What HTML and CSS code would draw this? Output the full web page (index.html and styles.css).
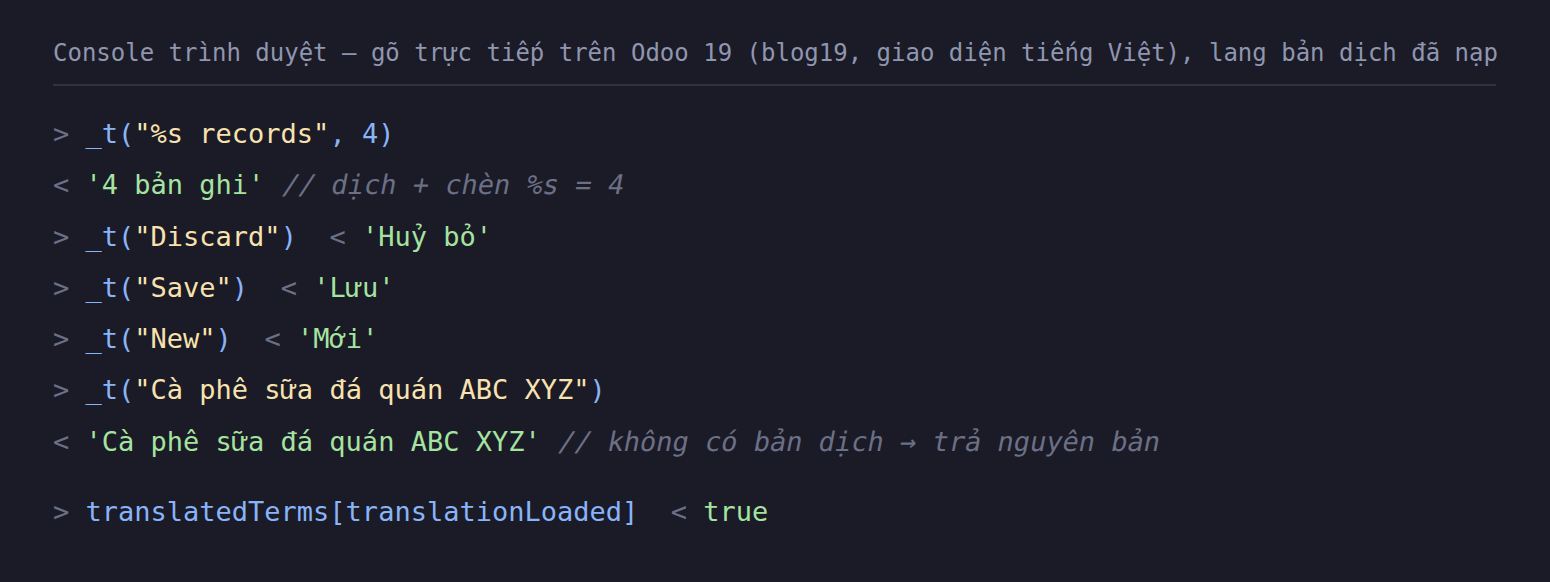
FILE: index.html
```html
<!DOCTYPE html>
<html lang="vi">
<head>
<meta charset="utf-8">
<title>Console</title>
<link rel="stylesheet" href="styles.css">
</head>
<body>
<main class="console">
  <header class="head">Console trình duyệt — gõ trực tiếp trên Odoo 19 (blog19, giao diện tiếng Việt), lang bản dịch đã nạp</header>
  <div class="lines">
    <div class="line"><span class="p">&gt;</span> <span class="fn">_t(</span><span class="str">"%s records"</span><span class="fn">, 4)</span></div>
    <div class="line"><span class="p">&lt;</span> <span class="res">'4 bản ghi'</span> <span class="cm">// dịch + chèn %s = 4</span></div>
    <div class="line"><span class="p">&gt;</span> <span class="fn">_t(</span><span class="str">"Discard"</span><span class="fn">)</span>  <span class="p">&lt;</span> <span class="res">'Huỷ bỏ'</span></div>
    <div class="line"><span class="p">&gt;</span> <span class="fn">_t(</span><span class="str">"Save"</span><span class="fn">)</span>  <span class="p">&lt;</span> <span class="res">'Lưu'</span></div>
    <div class="line"><span class="p">&gt;</span> <span class="fn">_t(</span><span class="str">"New"</span><span class="fn">)</span>  <span class="p">&lt;</span> <span class="res">'Mới'</span></div>
    <div class="line"><span class="p">&gt;</span> <span class="fn">_t(</span><span class="str">"Cà phê sữa đá quán ABC XYZ"</span><span class="fn">)</span></div>
    <div class="line"><span class="p">&lt;</span> <span class="res">'Cà phê sữa đá quán ABC XYZ'</span> <span class="cm">// không có bản dịch → trả nguyên bản</span></div>
    <div class="line gap"><span class="p">&gt;</span> <span class="fn">translatedTerms[translationLoaded]</span>  <span class="p">&lt;</span> <span class="res">true</span></div>
  </div>
</main>
</body>
</html>
```

FILE: styles.css
```css
html, body {
  margin: 0;
  padding: 0;
  background: #1a1b26;
}
body {
  font-family: "DejaVu Sans Mono", "Liberation Mono", monospace;
  color: #cdd6f4;
  height: 582px;
  overflow: hidden;
}
.console {
  padding: 35px 54px 0 53px;
}
.head {
  font-size: 24px;
  line-height: 36px;
  color: #9096b0;
  padding-bottom: 13px;
  border-bottom: 2px solid #303144;
  white-space: nowrap;
}
.lines {
  padding-top: 22px;
  font-size: 27px;
}
.line {
  line-height: 51.3px;
  white-space: pre;
}
.line.gap {
  margin-top: 19px;
}
.p { color: #6c7086; }
.fn { color: #89b4fa; }
.str { color: #f9e2af; }
.res { color: #a6e3a1; }
.cm {
  color: #6c7086;
  display: inline-block;
  transform: skewX(-11deg);
  transform-origin: 0 70%;
}
```
